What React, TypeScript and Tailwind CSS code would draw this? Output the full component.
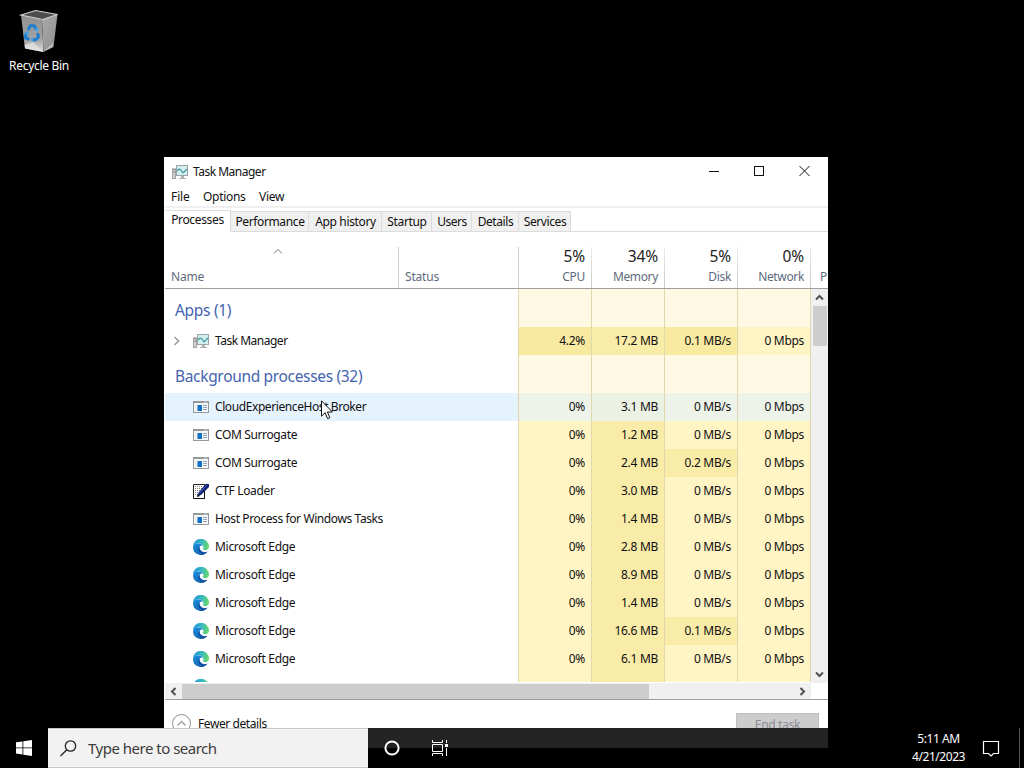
import React from "react";

type IconKind = "tm" | "app" | "ctf" | "edge";
type Row = {
  name: string;
  icon: IconKind;
  track: string;
  cpu: string;
  mem: string;
  disk: string;
  hot?: boolean;
};

const EDGE = { name: "Microsoft Edge", icon: "edge" as IconKind, track: "tracking-[-0.3px]", cpu: "0%" };

const rows: Row[] = [
  { name: "COM Surrogate", icon: "app", track: "tracking-[-0.37px]", cpu: "0%", mem: "1.2 MB", disk: "0 MB/s" },
  { name: "COM Surrogate", icon: "app", track: "tracking-[-0.37px]", cpu: "0%", mem: "2.4 MB", disk: "0.2 MB/s", hot: true },
  { name: "CTF Loader", icon: "ctf", track: "tracking-[-0.35px]", cpu: "0%", mem: "3.0 MB", disk: "0 MB/s" },
  { name: "Host Process for Windows Tasks", icon: "app", track: "tracking-[-0.4px]", cpu: "0%", mem: "1.4 MB", disk: "0 MB/s" },
  { ...EDGE, mem: "2.8 MB", disk: "0 MB/s" },
  { ...EDGE, mem: "8.9 MB", disk: "0 MB/s" },
  { ...EDGE, mem: "1.4 MB", disk: "0 MB/s" },
  { ...EDGE, mem: "16.6 MB", disk: "0.1 MB/s", hot: true },
  { ...EDGE, mem: "6.1 MB", disk: "0 MB/s" },
];

function TaskManagerIcon() {
  return (
    <svg width="16" height="16" viewBox="0 0 16 16" className="shrink-0">
      <rect x="0.5" y="5.5" width="3" height="9" fill="#d0d0d0" stroke="#a2a2a2" />
      <path d="M0 5h4M1 8h2" stroke="#8a8a8a" />
      <rect x="4.500" y="1.500" width="11" height="10" fill="#d3f0ee" stroke="#9aa5aa" />
      <path d="M5 7l2-2 2 1 2 3 2-2 2-2" fill="none" stroke="#3f979f" strokeWidth="1.100" />
      <path d="M9 12h3v2H9z" fill="#b0b0b0" />
      <path d="M7 14.500h7" stroke="#b0b0b0" />
    </svg>
  );
}

function AppIcon() {
  return (
    <svg width="16" height="16" viewBox="0 0 16 16" className="shrink-0">
      <rect x="0.5" y="2.5" width="15" height="11" fill="#f7f7f7" stroke="#94989b" />
      <rect x="0" y="2" width="16" height="2" fill="#94989b" />
      <rect x="11" y="2.5" width="3" height="1" fill="#d4d7d9" />
      <rect x="4.500" y="6" width="4.500" height="6" fill="#1271c4" />
      <path d="M10 6.500h4M10 8.500h4M10 10.500h4" stroke="#8fa3b5" />
      <path d="M2 7h2M2 9h2M2 11h2" stroke="#e0e3e5" />
    </svg>
  );
}

function CtfIcon() {
  return (
    <svg width="16" height="16" viewBox="0 0 16 16" className="shrink-0">
      <path d="M.5 1.500h11v14H.5z" fill="#fff" stroke="#222" />
      <path d="M2 3.500h8M2 5.500h8M2 7.500h7M2 9.500h5M2 11.500h4" stroke="#888" strokeDasharray="1 1" />
      <path d="M11.500 8v7.500H.5" fill="none" stroke="#111" />
      <path d="M12.500 1H16v3L8.500 11.500 4 14l1.200-4z" fill="#10206e" />
      <path d="M14 2L6 10.500" stroke="#4f6bd0" />
      <path d="M4 14l1-3 2 2z" fill="#111" />
    </svg>
  );
}

function EdgeIcon() {
  return (
    <svg width="16" height="16" viewBox="0 0 16 16" className="shrink-0">
      <defs>
        <linearGradient id="edgeTop" x1="0" y1="0.3" x2="1" y2="0.5">
          <stop offset="0" stopColor="#2795dc" />
          <stop offset="0.5" stopColor="#35b7c4" />
          <stop offset="1" stopColor="#68d86b" />
        </linearGradient>
        <linearGradient id="edgeBody" x1="0" y1="0" x2="0.6" y2="1">
          <stop offset="0" stopColor="#1b8fdd" />
          <stop offset="1" stopColor="#1163b3" />
        </linearGradient>
      </defs>
      <path d="M0 8A8 8 0 0 1 16 7.500c0 2.500-2 3.700-4 3.700-1.500 0-2.300-.6-2.300-1.200 0-.5.7-.8.700-1.900C10.400 6 8.300 4.600 5.800 4.600 2.500 4.600 0 6.500 0 8z" fill="url(#edgeTop)" />
      <path d="M0 8c0-2 2.200-3.600 4.900-3.600 2.400 0 4.300.9 5.100 2.300C8.200 5.900 6 7.300 6 9.600c0 2.800 2.500 4.700 5.300 4.300 1.300-.2 2.500-.8 3.100-1.100A8 8 0 0 1 0 8z" fill="url(#edgeBody)" />
      <path d="M6.700 7.400C4.800 8.500 5 11 6.200 12.600c1.200 1.700 3.100 2.500 4.700 2.700 1.600-.6 2.800-1.600 3.600-2.700-2.800 1.200-5.600.5-7-1.500-.9-1.200-.9-2.600-.8-3.700z" fill="#0e4f9c" />
      <path d="M7.500 7.500c-.8 2 .6 4.200 3.100 4.500 1.800.2 3.300-.3 4.200-.9-2.200.5-4.900 0-5-1.200 0-.5.6-.8.600-1.700-.3-1.200-2.200-1.700-2.900-.7z" fill="#f3fbff" />
    </svg>
  );
}

function RowIcon({ kind }: { kind: IconKind }) {
  if (kind === "tm") return <TaskManagerIcon />;
  if (kind === "ctf") return <CtfIcon />;
  if (kind === "edge") return <EdgeIcon />;
  return <AppIcon />;
}

const cell = "flex h-full w-[73px] shrink-0 items-center justify-end border-r border-[#dfd7ae] pr-[6px] tracking-[-0.3px] whitespace-nowrap";

function GroupRow({ label, track }: { label: string; track: string }) {
  return (
    <div className="flex h-[38px] shrink-0">
      <div className={"flex w-[354px] shrink-0 items-center border-r border-[#dfd7ae] pt-[4px] pl-[10px] text-[15.5px] text-[#4463b0] " + track}>{label}</div>
      {[0, 1, 2, 3].map((i) => (
        <div key={i} className={cell + " bg-[#fff9e4]"} />
      ))}
    </div>
  );
}

function ProcessRow({ row, bg, nameBg = "bg-white", arrow = false }: { row: Row; bg: string[]; nameBg?: string; arrow?: boolean }) {
  return (
    <div className="flex h-7 shrink-0">
      <div className={"flex w-[354px] shrink-0 items-center border-r border-[#dfd7ae] " + nameBg}>
        <div className="flex w-7 shrink-0 items-center pl-2">
          {arrow && (
            <svg width="8" height="10" viewBox="0 0 8 10" fill="none" stroke="#a0a0a0" strokeWidth="1.700">
              <path d="M1.500 1l4 4-4 4" />
            </svg>
          )}
        </div>
        <RowIcon kind={row.icon} />
        <span className={"pl-[6px] whitespace-nowrap " + row.track}>{row.name}</span>
      </div>
      <div className={cell + " " + bg[0]}>{row.cpu}</div>
      <div className={cell + " " + bg[1]}>{row.mem}</div>
      <div className={cell + " " + bg[2]}>{row.disk}</div>
      <div className={cell + " " + bg[3]}>0 Mbps</div>
    </div>
  );
}

function ClippedRow({ bg }: { bg: string[] }) {
  return (
    <div className="flex h-[9px] shrink-0 overflow-hidden">
      <div className="flex w-[354px] shrink-0 items-start border-r border-[#dfd7ae] pt-[6px] pl-7">
        <EdgeIcon />
      </div>
      {bg.map((b, i) => (
        <div key={i} className={cell + " " + b} />
      ))}
    </div>
  );
}

function Tab({ label, cls }: { label: string; cls: string }) {
  return (
    <div className={"flex h-[21px] items-center justify-center border-t border-r border-b border-[#dcdcdc] bg-[#f0f0f0] pt-px pl-px whitespace-nowrap " + cls}>
      {label}
    </div>
  );
}

function HeaderCell({ value, label, track }: { value: string; label: string; track: string }) {
  return (
    <div className="flex w-[73px] shrink-0">
      <div className="flex grow flex-col items-end pr-[6px]">
        <span className="-mt-px h-[20px] text-[15.500px] leading-[20px] tracking-[-0.1px] text-[#222]">{value}</span>
        <span className={"mt-px h-[20px] leading-[20px] text-[#606b7c] " + track}>{label}</span>
      </div>
      <div className="w-px bg-linear-to-b from-[#ececec] to-[#c8c8c8]" />
    </div>
  );
}

function RecycleBin() {
  return (
    <svg width="40" height="44" viewBox="0 0 40 44">
      <defs>
        <linearGradient id="binL" x1="0" y1="0" x2="0" y2="1">
          <stop offset="0" stopColor="#8f8f8f" />
          <stop offset="0.65" stopColor="#a3a3a3" />
          <stop offset="1" stopColor="#dedede" />
        </linearGradient>
        <linearGradient id="binR" x1="0" y1="0" x2="1" y2="1">
          <stop offset="0" stopColor="#adadad" />
          <stop offset="1" stopColor="#8a8a8a" />
        </linearGradient>
      </defs>
      <path d="M2 6l21 4.500 1.500 32.500-18.500-3.500z" fill="url(#binL)" />
      <path d="M23 10.500L38.500 5.500 34.500 38l-10 5z" fill="url(#binR)" />
      <path d="M2 6l14.500-4.500L38.500 5.500 23.500 10.500z" fill="#4c4c4c" stroke="#d0d0d0" strokeWidth="1.200" />
      <path d="M5.500 36l9-3 9.500 10-18-3.500z" fill="#ececec" opacity=".6" />
      <path d="M25 42l9-8-.4 4z" fill="#d8d8d8" opacity=".6" />
      <g fill="none" stroke="#1e7fcf" strokeWidth="3">
        <path d="M9 21l2.500-4.500 4 .5 1.500 3.500" />
        <path d="M18.500 24l1 4-3 3-3.500-.5" />
        <path d="M10.500 30.500l-4-1.500.5-4.500 1.500-1" />
      </g>
      <path d="M14 21.500l5 1 .5-4zM14 28l-2.500 2.500 2.500 3zM5 24.500l4-2.500 1.500 4z" fill="#4aa3e6" />
    </svg>
  );
}

export default function App() {
  const top: Row = { name: "Task Manager", icon: "tm", track: "tracking-[-0.5px]", cpu: "4.2%", mem: "17.2 MB", disk: "0.1 MB/s" };
  const host: Row = { name: "CloudExperienceHost Broker", icon: "app", track: "tracking-[-0.41px]", cpu: "0%", mem: "3.1 MB", disk: "0 MB/s" };
  const light = "bg-[#fff4c4]";
  const mid = "bg-[#f9eca8]";
  return (
    <div className="relative h-[768px] w-[1024px] overflow-hidden bg-black font-['Noto_Sans',sans-serif] text-[12px] leading-4 text-[#111]">
      <div className="absolute top-[9px] left-0 flex w-[78px] flex-col items-center">
        <RecycleBin />
        <span className="mt-[5px] tracking-[-0.3px] whitespace-nowrap text-white">Recycle Bin</span>
      </div>

      <div className="absolute top-[157px] left-[164px] flex h-[571px] w-[664px] flex-col overflow-hidden bg-white pl-px">
        <div className="flex h-[30px] shrink-0 items-center pl-[7px]">
          <TaskManagerIcon />
          <span className="pl-[5px] tracking-[-0.5px]">Task Manager</span>
          <div className="ml-auto flex h-full items-center pr-[18px] pb-[2px]">
            <svg width="102" height="12" viewBox="0 0 102 12" fill="none" stroke="#111">
              <path d="M1 6.500h10" />
              <rect x="46.500" y="1.500" width="9" height="9" />
              <path d="M91.500 1l10 10M101.500 1l-10 10" />
            </svg>
          </div>
        </div>
        <div className="flex h-[19px] shrink-0 items-center pt-px pl-[6px] whitespace-nowrap">
          <span className="w-8 tracking-[-0.1px]">File</span>
          <span className="w-14 tracking-[-0.3px]">Options</span>
          <span className="tracking-[-0.3px]">View</span>
        </div>
        <div className="flex h-[26px] shrink-0 items-end border-t-2 border-[#f0f0f0] pt-[2px]">
          <div className="flex h-full w-[66px] shrink-0 justify-center border-t border-r border-[#dcdcdc] pt-px tracking-[-0.35px]">Processes</div>
          <Tab label="Performance" cls="w-[78px] tracking-[-0.38px]" />
          <Tab label="App history" cls="w-[73px] tracking-[-0.35px]" />
          <Tab label="Startup" cls="w-[50px] tracking-[-0.35px]" />
          <Tab label="Users" cls="w-[40px] tracking-[-0.45px]" />
          <Tab label="Details" cls="w-[47px] tracking-[-0.4px]" />
          <Tab label="Services" cls="w-[52px] tracking-[-0.4px]" />
          <div className="h-px grow bg-[#dcdcdc]" />
        </div>

        <div className="flex h-[57px] shrink-0 overflow-hidden border-b border-[#9f9f9f] pt-[15px] text-[#606b7c]">
          <div className="flex w-[234px] shrink-0 flex-col border-r border-[#cfcfcf] pl-[6px]">
            <div className="flex h-[20px] justify-center pt-px pr-[14px]">
              <svg width="10" height="7" viewBox="0 0 10 7" fill="none" stroke="#777">
                <path d="M1 5.500l4-4 4 4" />
              </svg>
            </div>
            <span className="leading-[20px] tracking-[-0.2px]">Name</span>
          </div>
          <div className="flex w-[120px] shrink-0 flex-col border-r border-[#cfcfcf] pt-[20px] pl-[6px] leading-[20px] tracking-[-0.2px]">Status</div>
          <HeaderCell value="5%" label="CPU" track="tracking-[-0.3px]" />
          <HeaderCell value="34%" label="Memory" track="tracking-[-0.35px]" />
          <HeaderCell value="5%" label="Disk" track="tracking-[-0.3px]" />
          <HeaderCell value="0%" label="Network" track="tracking-[-0.35px]" />
          <span className="pt-[20px] pl-[9px] leading-[20px]">P</span>
        </div>

        <div className="flex h-[394px] shrink-0 overflow-hidden">
          <div className="flex w-[646px] shrink-0 flex-col overflow-hidden">
            <GroupRow label="Apps (1)" track="tracking-[-0.3px]" />
            <ProcessRow row={top} arrow bg={["bg-[#f8e9a0]", mid, "bg-[#f8eaa0]", light]} />
            <GroupRow label="Background processes (32)" track="tracking-[-0.33px]" />
            <ProcessRow row={host} nameBg="bg-[#e5f3ff]" bg={["bg-[#eef3ea]", "bg-[#ebf1e3]", "bg-[#eef3ea]", "bg-[#eef3ea]"]} />
            {rows.map((r, i) => (
              <ProcessRow key={i} row={r} bg={[light, mid, r.hot ? mid : light, light]} />
            ))}
            <ClippedRow bg={[light, mid, light, light]} />
          </div>
          <div className="flex grow flex-col bg-[#f0f0f0]">
            <div className="flex h-[17px] items-center justify-center">
              <svg width="9" height="7" viewBox="0 0 9 7" fill="none" stroke="#505050" strokeWidth="2"><path d="M1 5.500L4.500 2 8 5.500" /></svg>
            </div>
            <div className="mr-px ml-[2px] h-[40px] bg-[#cdcdcd]" />
            <div className="mt-auto flex h-[17px] items-center justify-center">
              <svg width="9" height="7" viewBox="0 0 9 7" fill="none" stroke="#505050" strokeWidth="2"><path d="M1 1.500L4.500 5 8 1.500" /></svg>
            </div>
          </div>
        </div>

        <div className="flex h-[17px] shrink-0 border-b border-[#9f9f9f]">
          <div className="flex w-[646px] items-center bg-[#f0f0f0]">
            <div className="flex w-[17px] justify-center">
              <svg width="7" height="9" viewBox="0 0 7 9" fill="none" stroke="#505050" strokeWidth="2"><path d="M5.500 1L2 4.500 5.500 8" /></svg>
            </div>
            <div className="h-[15px] w-[467px] bg-[#cdcdcd]" />
            <div className="ml-auto flex w-[17px] justify-center">
              <svg width="7" height="9" viewBox="0 0 7 9" fill="none" stroke="#505050" strokeWidth="2"><path d="M1.500 1L5 4.500 1.500 8" /></svg>
            </div>
          </div>
        </div>

        <div className="flex shrink-0 items-start pt-[13px] pr-[9px] pl-[7px]">
          <svg width="20" height="20" viewBox="0 0 20 20" fill="none" stroke="#8c8c8c" className="mt-px">
            <circle cx="9.500" cy="9.500" r="9" />
            <path d="M5.500 11.500l4-4 4 4" strokeWidth="1.500" stroke="#a3a3a3" />
          </svg>
          <span className="mt-[3px] pl-[6px] tracking-[-0.42px]">Fewer details</span>
          <div className="ml-auto flex h-[23px] w-[83px] items-center justify-center border border-[#bfbfbf] bg-[#cccccc] tracking-[-0.3px] text-[#8d8d96]">End task</div>
        </div>
      </div>

      <svg className="absolute top-[400px] left-[321px]" width="13" height="20" viewBox="0 0 13 20">
        <path d="M.5.800v15.400l3.600-3.500 2.500 6 2.300-1-2.500-5.700h5z" fill="#fff" stroke="#111" />
      </svg>

      <div className="absolute top-[728px] left-0 flex h-10 w-full bg-black">
        <div className="flex w-12 items-center justify-center">
          <svg width="16" height="16" viewBox="0 0 16 16" fill="#fff">
            <path d="M0 2.300l6.500-.9v6.100H0zM7.300 1.300L16 0v7.500H7.300zM0 8.300h6.500v6.200L0 13.600zM7.300 8.300H16V16l-8.700-1.300z" />
          </svg>
        </div>
        <div className="flex w-[320px] items-center border-y border-[#c8c8c8] bg-[#f2f2f2] pl-[12px]">
          <svg width="17" height="17" viewBox="0 0 17 17" fill="none" stroke="#222" strokeWidth="1.300">
            <circle cx="10.500" cy="6" r="5.200" />
            <path d="M6.800 9.700L.5 16" />
          </svg>
          <span className="pl-[11px] text-[15px] leading-5 tracking-[-0.5px] whitespace-nowrap text-[#3c3c3c]">Type here to search</span>
        </div>
        <div className="flex w-[460px] items-center bg-linear-to-b from-[#232323] from-50% to-black to-50% pl-[16px]">
          <svg width="16" height="16" viewBox="0 0 16 16" fill="none" stroke="#fff" strokeWidth="2"><circle cx="8" cy="8" r="6.600" /></svg>
          <svg width="17" height="16" viewBox="0 0 17 16" fill="none" stroke="#fff" className="ml-[32px]">
            <path d="M.5 0v2.500h10V0M.5 16v-2.500h10V16M.5 4.500h10v7H.5zM14.500 0v3M14.500 8v8" />
            <rect x="13" y="4" width="3" height="3" fill="#fff" stroke="none" />
          </svg>
        </div>
        <div className="ml-auto flex flex-col items-center pt-[2px] leading-[18px] tracking-[-0.45px] whitespace-nowrap text-white">
          <span>5:11 AM</span>
          <span>4/21/2023</span>
        </div>
        <div className="flex w-[54px] items-center pl-[17px]">
          <svg width="18" height="18" viewBox="0 0 18 18" fill="none" stroke="#fff" strokeWidth="1.200">
            <path d="M1.500 2.500h15v12h-5L9 17l-2.500-2.500h-5z" />
          </svg>
        </div>
        <div className="mr-1 w-px bg-[#555]" />
      </div>
    </div>
  );
}
